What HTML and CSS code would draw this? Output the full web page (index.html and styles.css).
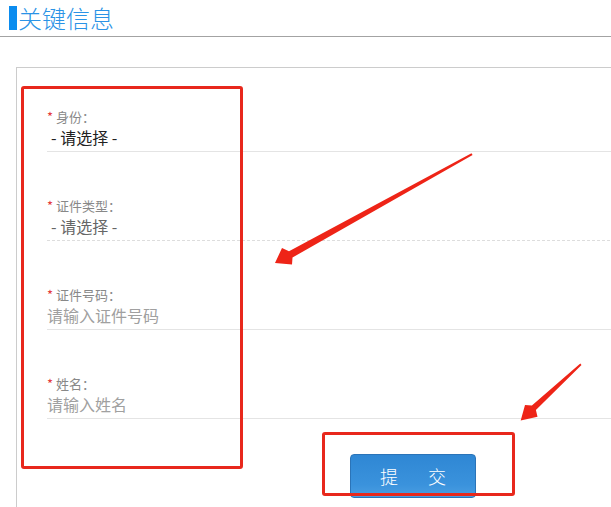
FILE: index.html
```html
<!DOCTYPE html>
<html lang="zh-CN">
<head>
<meta charset="utf-8">
<title>关键信息</title>
<link rel="stylesheet" href="styles.css">
</head>
<body>
<div class="page">
  <header class="title-bar">
    <span class="title-mark"></span>
    <h1 class="title">关键信息</h1>
  </header>

  <section class="card">
    <div class="field">
      <div class="label"><span class="req">*</span> 身份：</div>
      <div class="value select dark">- 请选择 -</div>
    </div>
    <div class="field dashed">
      <div class="label"><span class="req">*</span> 证件类型：</div>
      <div class="value select">- 请选择 -</div>
    </div>
    <div class="field">
      <div class="label"><span class="req">*</span> 证件号码：</div>
      <div class="value placeholder">请输入证件号码</div>
    </div>
    <div class="field">
      <div class="label"><span class="req">*</span> 姓名：</div>
      <div class="value placeholder">请输入姓名</div>
    </div>
    <div class="actions">
      <button class="submit" type="button">提　交</button>
    </div>
  </section>

  <div class="mark-box mark-fields"></div>
  <div class="mark-box mark-button"></div>
  <svg class="arrows" width="611" height="507" viewBox="0 0 611 507">
    <polygon fill="#ee2417" points="275,263 282,248 289,251.2 471.5,153.3 472.6,155 292.5,257.5 292,264.5"/>
    <polygon fill="#ee2417" points="520.7,420.5 525,405 531.9,405.5 580.3,363.5 581.5,365 535.9,409.9 537.5,416.8"/>
  </svg>
</div>
</body>
</html>
```

FILE: styles.css
```css
html, body {
  margin: 0;
  padding: 0;
  background: #ffffff;
}

body {
  font-family: "Noto Sans CJK SC", "Noto Sans", sans-serif;
  overflow: hidden;
}

.page {
  position: relative;
  width: 611px;
  height: 507px;
  overflow: hidden;
}

.title-bar {
  display: flex;
  align-items: center;
  height: 36px;
  padding-left: 9px;
  border-bottom: 1px solid #a3a3a3;
}

.title-mark {
  width: 8px;
  height: 24px;
  background: #0b8cef;
  margin-right: 1px;
}

.title {
  margin: 0;
  font-size: 24px;
  font-weight: 300;
  line-height: 36px;
  color: #2a93e6;
}

.card {
  margin: 30px -40px 0 16px;
  border: 1px solid #cccccc;
  padding: 41px 0 0 30px;
  height: 600px;
}

.field {
  border-bottom: 1px solid #e4e4e4;
  margin-bottom: 46px;
}

.field.dashed {
  border-bottom: 1px dashed #dddddd;
}

.label {
  font-size: 13px;
  line-height: 15px;
  color: #888888;
  margin-bottom: 3px;
}

.req {
  color: #e4393c;
}

.value {
  font-size: 16px;
  line-height: 20px;
  padding-bottom: 4px;
  color: #a0a0a0;
}

.value.select {
  padding-left: 4px;
  color: #666666;
}

.value.select.dark {
  color: #222222;
}

.actions {
  padding-left: 303px;
  margin-top: -11px;
}

.submit {
  width: 126px;
  height: 44px;
  border: 1px solid #2b74b8;
  border-radius: 4px;
  background: linear-gradient(#2f87d4, #3a92dc 70%, #4a9ee2);
  color: #ffffff;
  font-family: "Noto Sans CJK SC", sans-serif;
  font-size: 18px;
  font-weight: 300;
  letter-spacing: 6px;
  text-indent: 6px;
  padding: 0;
}

.mark-box {
  position: absolute;
  border: 3px solid #e8281c;
  border-radius: 3px;
  box-sizing: border-box;
}

.mark-fields {
  left: 21px;
  top: 86px;
  width: 222px;
  height: 383px;
}

.mark-button {
  left: 322px;
  top: 432px;
  width: 193px;
  height: 64px;
}

.arrows {
  position: absolute;
  left: 0;
  top: 0;
  pointer-events: none;
}
```
